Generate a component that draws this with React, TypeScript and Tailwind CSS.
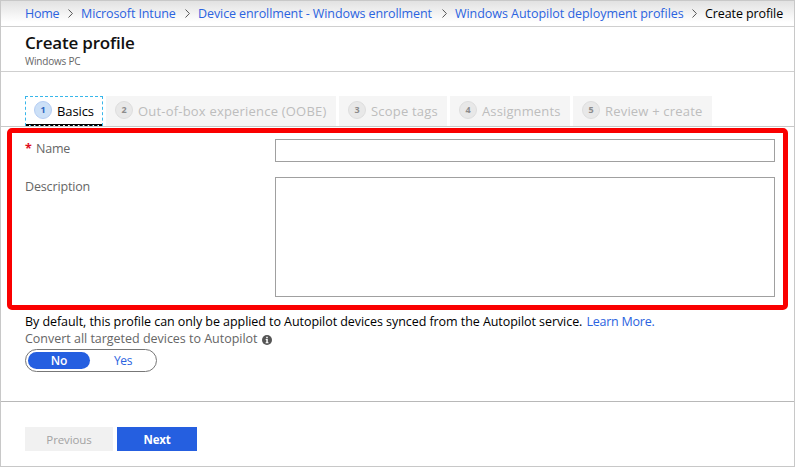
import type { ReactNode } from 'react';

function Chevron({ className }: { className: string }) {
  return (
    <svg className={`h-[9px] w-[5px] shrink-0 ${className}`} viewBox="0 0 5 9" fill="none" stroke="#555555" strokeWidth="1">
      <path d="M0.5 0.5 4.4 4.5 0.5 8.5" />
    </svg>
  );
}

function Breadcrumbs() {
  return (
    <nav className="flex h-[26px] items-center border-b border-[#cfcfcf] bg-linear-to-b from-[#e2e2e2] to-white to-85% pl-6 text-[12.5px] leading-5 text-[#2b63e0]">
      <a className="w-[43px] tracking-[-0.3px]">Home</a>
      <Chevron className="mr-[8px]" />
      <a className="w-[104px] tracking-[-0.1px]">Microsoft Intune</a>
      <Chevron className="mr-[8px]" />
      <a className="w-[244px] tracking-[-0.09px]">Device enrollment - Windows enrollment</a>
      <Chevron className="mr-[8px]" />
      <a className="w-[237px] tracking-[-0.04px]">Windows Autopilot deployment profiles</a>
      <Chevron className="mr-[8px]" />
      <span className="tracking-[-0.1px] text-black">Create profile</span>
    </nav>
  );
}

function Step({ n, className, children }: { n: number; className: string; children: ReactNode }) {
  return (
    <div className={`flex h-[30px] shrink-0 bg-[#f5f5f5] pt-[5px] pl-[9px] text-[13px] text-[#bdbdbd] ${className}`}>
      <span className="mr-[5px] flex size-[18px] shrink-0 justify-center rounded-full border border-[#dedede] bg-[#e8e8e8] text-[9px] leading-[15px] font-bold tracking-normal text-[#8c8c8c]">
        {n}
      </span>
      <span className="leading-5">{children}</span>
    </div>
  );
}

function Steps() {
  return (
    <div className="flex h-[55px] items-end gap-[3px] border-b border-[#c8c8c8] pl-6">
      <div className="relative flex h-[30px] w-[78px] shrink-0 border border-dashed border-[#38b6ea] bg-white pt-1 pl-2 text-[13px] text-black">
        <span className="mr-[5px] flex size-[18px] shrink-0 justify-center rounded-full border border-[#b5cdf3] bg-[#cce0f7] text-[9px] leading-[15px] font-bold text-[#2a63bd]">
          1
        </span>
        <span className="leading-5 tracking-[-0.1px]">Basics</span>
        <span className="absolute inset-x-0 bottom-0 h-px bg-black" />
        <span className="absolute inset-x-0 -bottom-px border-b border-dashed border-black" />
      </div>
      <Step n={2} className="w-[230px] tracking-[0.2px]">Out-of-box experience (OOBE)</Step>
      <Step n={3} className="w-[108px] tracking-[0.2px]">Scope tags</Step>
      <Step n={4} className="w-[120px] tracking-[0.13px]">Assignments</Step>
      <Step n={5} className="w-[139px] tracking-[0.19px]">Review + create</Step>
    </div>
  );
}

export default function App() {
  return (
    <div className="flex h-[467px] w-[795px] flex-col border border-[#c8c8c8] bg-white font-['Open_Sans','Noto_Sans',sans-serif] text-[12.5px] text-[#666666]">
      <Breadcrumbs />
      <header className="h-[45px] border-b border-[#cfcfcf] pt-1 pl-6">
        <h1 className="text-[17px] leading-[24px] font-semibold tracking-[-0.2px] text-[#111111]">Create profile</h1>
        <p className="text-[10px] leading-[12px] tracking-[-0.2px]">Windows PC</p>
      </header>
      <Steps />
      <section className="mt-px ml-1.5 h-[182px] w-[781px] rounded-[5px] border-5 border-[#fa0000] pt-[6px] pl-[13px]">
        <label className="flex h-[38px]">
          <span className="flex w-[250px] leading-5">
            <span className="w-[11px] text-[12.5px] font-bold text-[#e00b1c]">*</span>
            <span className="tracking-[-0.2px]">Name</span>
          </span>
          <input className="h-[23px] w-[500px] border border-[#a0a0a0] bg-white outline-none" />
        </label>
        <label className="flex">
          <span className="w-[250px] leading-5 tracking-[-0.15px]">Description</span>
          <textarea className="h-[120px] w-[500px] resize-none border border-[#a0a0a0] bg-white outline-none" />
        </label>
      </section>
      <section className="h-[92px] border-b border-[#b8b8b8] pt-[2px] pl-6">
        <p className="flex h-[18px] leading-5 text-black">
          <span className="w-[561.5px] tracking-[-0.06px]">
            By default, this profile can only be applied to Autopilot devices synced from the Autopilot service.
          </span>
          <a className="tracking-[-0.25px] text-[#2b63e0]">Learn More.</a>
        </p>
        <p className="flex h-[19px] leading-[18px]">
          <span className="w-[237px] tracking-[-0.02px]">Convert all targeted devices to Autopilot</span>
          <svg className="mt-[5px] size-[10px]" viewBox="0 0 10 10">
            <circle cx="5" cy="5" r="5" fill="#555555" />
            <path d="M4.2 1.7h1.6v1.5H4.2zM3.7 4.1h2.1v3.2h.7v.9H3.6v-.9h.7V5h-.6z" fill="#ffffff" />
          </svg>
        </p>
        <div className="flex h-[23px] w-[132px] rounded-full border border-[#777777] p-[2px] text-[12px] leading-[17px]">
          <span className="h-[17px] w-[62px] rounded-full bg-[#255fe0] text-center font-semibold text-white">No</span>
          <span className="flex-1 pl-0.5 text-center tracking-[-0.4px] text-[#2b63e0]">Yes</span>
        </div>
      </section>
      <footer className="flex gap-1 pt-[25px] pl-6 text-[11.5px] leading-[25px]">
        <button className="h-6 w-[88px] bg-[#f1f1f1] font-medium tracking-[-0.1px] text-[#a3a3a3]">Previous</button>
        <button className="h-6 w-20 bg-[#255fe0] font-bold tracking-[-0.2px] text-white">Next</button>
      </footer>
    </div>
  );
}
